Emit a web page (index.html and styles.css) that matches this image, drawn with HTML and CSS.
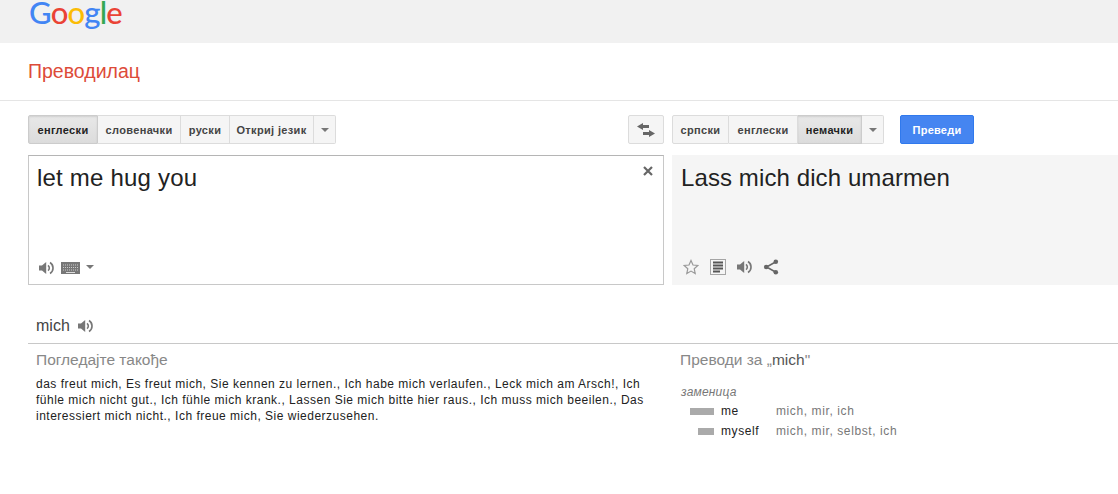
FILE: index.html
```html
<!DOCTYPE html>
<html lang="sr">
<head>
<meta charset="utf-8">
<title>Преводилац</title>
<link rel="stylesheet" href="styles.css">
</head>
<body>
<svg class="defs" width="0" height="0" aria-hidden="true">
  <symbol id="spk" viewBox="0 0 16 16">
    <path d="M1 5.500h3L8.200 2v12L4 10.500H1z" fill="currentColor"/>
    <path d="M10 5.300a3.400 3.400 0 0 1 0 5.400" fill="none" stroke="currentColor" stroke-width="1.600"/>
    <path d="M12 2.500a6.500 6.500 0 0 1 0 11" fill="none" stroke="currentColor" stroke-width="1.600"/>
  </symbol>
</svg>
<header class="topbar"><div class="logo"><span class="b">G</span><span class="r">o</span><span class="y">o</span><span class="b">g</span><span class="g">l</span><span class="r">e</span></div></header>
<div class="titlebar"><h1 class="title">Преводилац</h1></div>
<main class="main">
  <div class="toolbar">
    <div class="toolbar-left">
      <div class="langs">
        <button class="lang on w-a">енглески</button>
        <button class="lang w-b">словеначки</button>
        <button class="lang w-c">руски</button>
        <button class="lang w-d">Откриј језик</button>
        <button class="lang caret-btn"><i class="caret"></i></button>
      </div>
      <button class="swap" aria-label="swap">
        <svg width="18" height="14" viewBox="0 0 18 14"><path d="M0 3.500 6 0v2h6v3H6v2z" fill="#666"/><path d="M18 10.500 12 7v2H6v3h6v2z" fill="#666"/></svg>
      </button>
    </div>
    <div class="toolbar-right">
      <div class="langs">
        <button class="lang w-e">српски</button>
        <button class="lang w-f">енглески</button>
        <button class="lang on w-g">немачки</button>
        <button class="lang caret-btn"><i class="caret"></i></button>
      </div>
      <button class="go">Преведи</button>
    </div>
  </div>
  <div class="panels">
    <section class="panel source">
      <div class="big">let me hug you</div>
      <svg class="close" width="10" height="10" viewBox="0 0 10 10"><path d="M1 1l8 8M9 1l-8 8" stroke="#666" stroke-width="2.200"/></svg>
      <div class="tools">
        <svg class="ico" width="16" height="16"><use href="#spk"/></svg>
        <svg class="kbd" width="19" height="12" viewBox="0 0 19 12"><rect width="19" height="12" fill="#777"/><path d="M2 3h15M2 5.500h15M2 8h15" stroke="#ccc" stroke-dasharray="1 1"/><path d="M5 10.500h9" stroke="#ddd"/></svg>
        <i class="caret small"></i>
      </div>
    </section>
    <section class="panel target">
      <div class="big">Lass mich dich umarmen</div>
      <div class="tools">
        <svg class="ico" width="16" height="16" viewBox="0 0 16 16"><path d="M8 1.500l2 4.500 4.800.5-3.600 3.200 1 4.800L8 12.100 3.800 14.500l1-4.800L1.200 6.500 6 6z" fill="none" stroke="#999" stroke-width="1.200"/></svg>
        <svg class="ico" width="16" height="16" viewBox="0 0 16 16"><rect x=".5" y=".5" width="15" height="15" fill="none" stroke="#555" stroke-dasharray="1 1"/><path d="M3 3.500h10M3 6.500h10M3 9.500h10M3 12.500h7" stroke="#555" stroke-width="2"/></svg>
        <svg class="ico tight" width="16" height="16"><use href="#spk"/></svg>
        <svg class="ico" width="16" height="16" viewBox="0 0 16 16"><path d="M12.500 3 3.500 8l9 5" fill="none" stroke="#666" stroke-width="1.500"/><circle cx="12.800" cy="2.800" r="2.300" fill="#666"/><circle cx="3.200" cy="8" r="2.300" fill="#666"/><circle cx="12.800" cy="13.200" r="2.300" fill="#666"/></svg>
      </div>
    </section>
  </div>
  <div class="word">
    <span>mich</span>
    <svg class="ico" width="16" height="16"><use href="#spk"/></svg>
  </div>
  <div class="details">
    <section class="see">
      <h2 class="head">Погледајте такође</h2>
      <p class="examples">das freut mich, Es freut mich, Sie kennen zu lernen., Ich habe mich verlaufen., Leck mich am Arsch!, Ich fühle mich nicht gut., Ich fühle mich krank., Lassen Sie mich bitte hier raus., Ich muss mich beeilen., Das interessiert mich nicht., Ich freue mich, Sie wiederzusehen.</p>
    </section>
    <section class="trans">
      <h2 class="head">Преводи за „<span class="dark">mich</span>"</h2>
      <div class="pos">заменица</div>
      <div class="row"><span class="barcell"><i class="bar wide"></i></span><span class="src">me</span><span class="alts">mich, mir, ich</span></div>
      <div class="row"><span class="barcell"><i class="bar narrow"></i></span><span class="src">myself</span><span class="alts">mich, mir, selbst, ich</span></div>
    </section>
  </div>
</main>
</body>
</html>
```
FILE: styles.css
```css
* { box-sizing: border-box; }
html, body { margin: 0; padding: 0; }
body { font-family: "Liberation Sans", Arial, sans-serif; background: #fff; width: 1118px; height: 494px; overflow: hidden; color: #222; }
.defs { position: absolute; }
button { font-family: inherit; margin: 0; }

.topbar { height: 43px; background: #f1f1f1; padding-left: 29px; overflow: hidden; }
.logo { font-family: Lato, sans-serif; font-size: 31px; line-height: 24px; height: 24px; font-weight: 500; letter-spacing: -.8px; }
.b { color: #4285f4; } .r { color: #ea4335; } .y { color: #fbbc05; } .g { color: #34a853; }

.titlebar { height: 58px; border-bottom: 1px solid #e5e5e5; padding-left: 28px; display: flex; align-items: center; }
.title { margin: 0; font-size: 19.5px; font-weight: 400; color: #dd4b39; }

.main { padding: 14px 0 0 28px; }
.toolbar { display: grid; grid-template-columns: 636px 1fr; column-gap: 8px; height: 29px; }
.toolbar-left { display: flex; justify-content: space-between; }
.toolbar-right { display: flex; gap: 16px; }
.langs { display: flex; }
.lang { height: 29px; padding: 0; border: 1px solid #dcdcdc; border-left-width: 0; background: #f5f5f5; font-size: 11px; font-weight: 700; color: #444; letter-spacing: .35px; }
.lang:first-child { border-left-width: 1px; border-radius: 2px 0 0 2px; }
.lang:last-child { border-radius: 0 2px 2px 0; }
.lang.on { background: linear-gradient(#e8e8e8, #dcdcdc); color: #222; box-shadow: inset 0 1px 2px rgba(0,0,0,.1); border-color: #ccc; }
.w-a { width: 70px; } .w-b { width: 83px; } .w-c { width: 49px; } .w-d { width: 84px; }
.w-e { width: 57px; } .w-f { width: 69px; } .w-g { width: 64px; }
.caret-btn { width: 22px; display: flex; align-items: center; justify-content: center; }
.caret { display: block; width: 0; height: 0; border: 4px solid transparent; border-top: 4px solid #777; border-bottom: 0; }
.swap { width: 36px; height: 29px; padding: 0; border: 1px solid #dcdcdc; border-radius: 2px; background: #f5f5f5; display: flex; align-items: center; justify-content: center; }
.go { width: 74px; height: 29px; padding: 0; border: 1px solid #3079ed; border-radius: 2px; background: #4585f1; color: #fff; font-size: 11px; font-weight: 700; letter-spacing: .25px; }

.panels { display: grid; grid-template-columns: 636px 1fr; column-gap: 8px; margin-top: 11px; height: 130px; }
.panel { position: relative; display: flex; flex-direction: column; justify-content: space-between; height: 130px; }
.source { border: 1px solid #c8c8c8; border-top-color: #b5b5b5; padding: 7px 8px 8px 8px; }
.target { background: #f5f5f5; padding: 8px 9px 10px 11px; }
.target .big { margin-left: -2px; letter-spacing: .1px; }
.big { font-size: 24px; line-height: 30px; color: #222; letter-spacing: .2px; }
.close { position: absolute; top: 10px; right: 10px; }
.tools { display: flex; align-items: center; gap: 11px; color: #777; height: 16px; }
.ico { display: block; color: #777; }
.ico.tight { margin-left: -1px; }
.source .tools { gap: 0; padding-left: 1px; }
.kbd { margin-left: 7px; }
.caret.small { margin-left: 6px; margin-bottom: 2px; }

.word { display: flex; align-items: center; gap: 7px; height: 59px; padding: 23px 0 0 8px; border-bottom: 1px solid #c8c8c8; font-size: 16px; color: #444; }
.details { display: grid; grid-template-columns: 636px 1fr; column-gap: 8px; padding-top: 7px; }
.see { padding-left: 8px; padding-right: 16px; }
.head { margin: 0; font-size: 15.5px; line-height: 18px; font-weight: 400; color: #888; }
.dark { color: #555; }
.examples { margin: 7px 0 0; font-size: 12px; line-height: 16px; color: #222; letter-spacing: .5px; }
.pos { margin: 15px 0 1px; font-size: 12px; line-height: 16px; font-style: italic; color: #777; letter-spacing: .2px; }
.row { display: flex; align-items: center; height: 20px; font-size: 12px; letter-spacing: .6px; }
.trans .pos { padding-left: 1px; }
.trans { padding-left: 8px; }
.barcell { width: 34px; margin-right: 7px; display: flex; justify-content: flex-end; }
.bar { display: block; height: 7px; background: #aaa; }
.bar.wide { width: 24px; } .bar.narrow { width: 16px; }
.src { width: 55px; color: #222; }
.alts { color: #777; }
```
